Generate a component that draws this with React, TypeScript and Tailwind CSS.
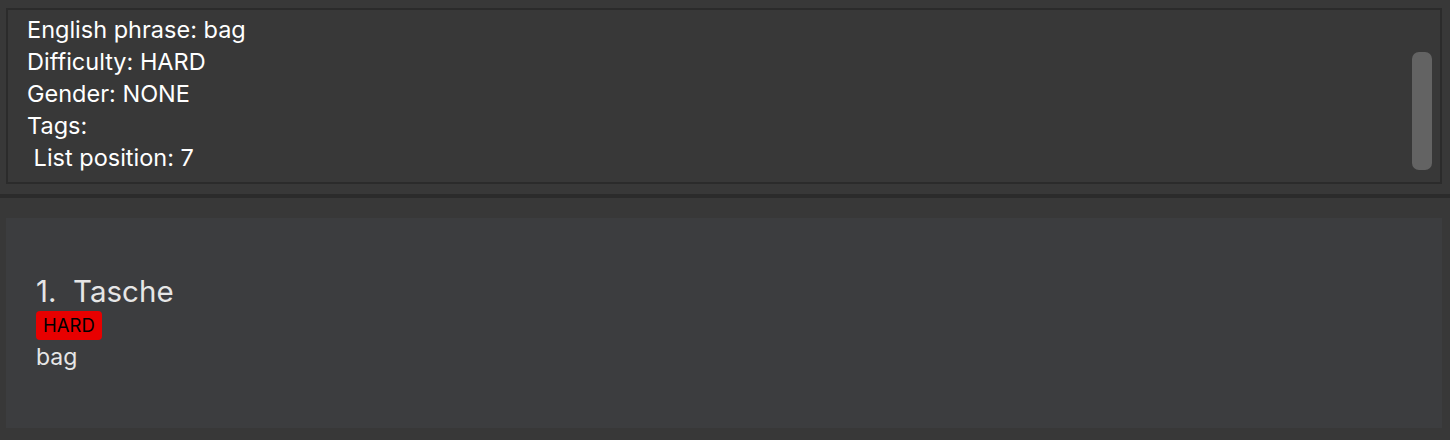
export default function App() {
  const lines = ['English phrase: bag', 'Difficulty: HARD', 'Gender: NONE', 'Tags:', ' List position: 7'];

  return (
    <div className="w-[1450px] h-[440px] bg-[#383838] overflow-hidden" style={{ fontFamily: 'Inter, "Open Sans", sans-serif' }}>
      {/* Detail panel */}
      <div className="pt-[8px] pl-[6px] pr-[8px]">
        <div className="relative h-[176px] border-2 border-[#2b2b2b] pl-[19px] pt-[4px]">
          {lines.map((line, i) => (
            <div key={i} className="text-[23.5px] leading-[32px] text-white whitespace-pre">
              {line}
            </div>
          ))}
          {/* Scrollbar thumb */}
          <div className="absolute right-[8px] top-[42px] w-[20px] h-[118px] rounded-[7px] bg-[#636363]" />
        </div>
      </div>

      {/* Divider */}
      <div className="mt-[10px] h-[4px] bg-[#2b2b2b]" />

      {/* List card */}
      <div className="pt-[20px] pl-[6px] pr-[8px]">
        <div className="h-[210px] bg-[#3c3d3f] pl-[30px] pt-[55px] text-[#e6e6e6]">
          <div className="text-[29.5px] leading-[36px] whitespace-pre">1.  Tasche</div>
          <div className="flex mt-[2px]">
            <span className="bg-[#e80000] text-black text-[18.5px] leading-[29px] px-[7px] rounded-[4px]">HARD</span>
          </div>
          <div className="text-[23px] leading-[34px]">bag</div>
        </div>
      </div>
    </div>
  );
}
